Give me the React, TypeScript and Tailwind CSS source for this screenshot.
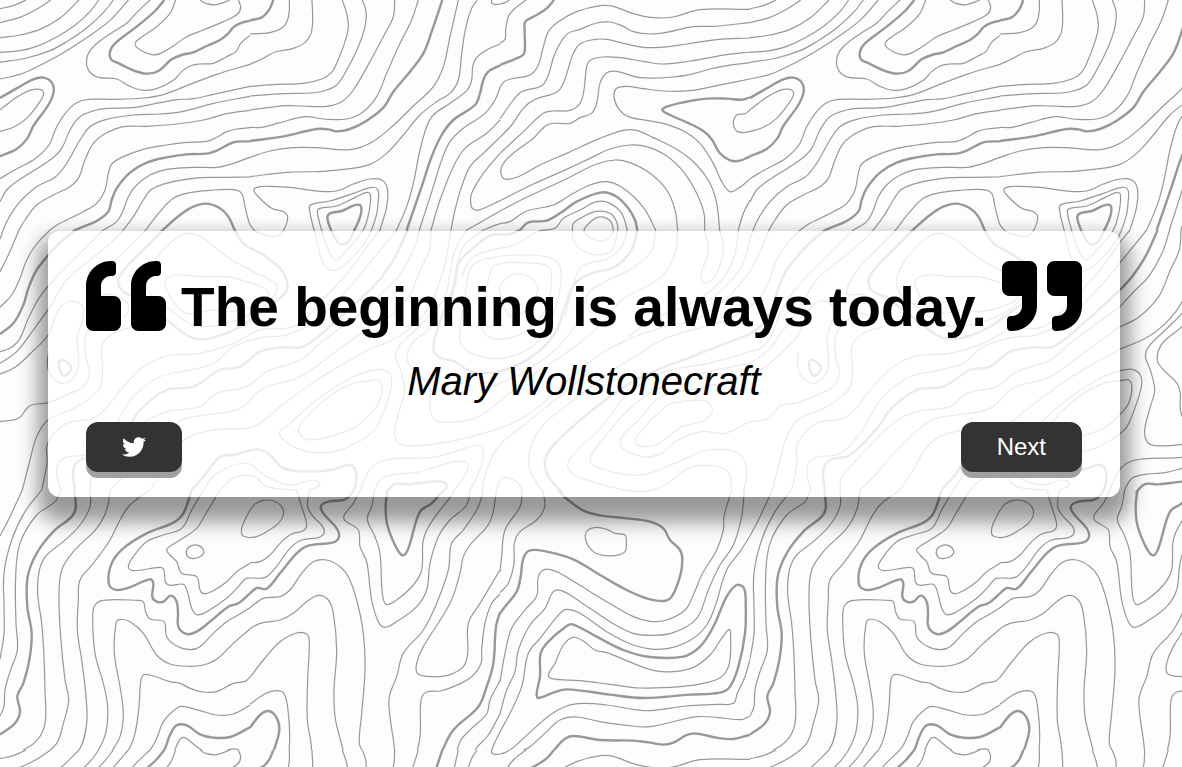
import { FaQuoteLeft, FaQuoteRight, FaTwitter } from "react-icons/fa";

type Region = { x: number; y: number; lines: string[] };

/*
 * Contour lines of the repeating map tile (2250 x 2250 units, three units per pixel).
 * Each entry is a list of "x,y" points. Prefix "!" marks an index contour,
 * suffix "z" a closed ring.
 */
const TILE = 2250;

const regions: Region[] = [
  {
    x: 0,
    y: 0,
    lines: [
      "0,26 40,17 78,0",
      "0,68 60,52 110,28 152,0",
      "0,113 60,105 120,88 180,54 237,0",
      "0,157 60,152 110,139 170,111 225,76 270,35 296,0",
      "0,187 80,174 150,152 200,125 260,84 310,38 340,0",
      "0,237 60,223 110,201 190,158 260,113 330,61 385,0",
      "450,0 410,38 380,70 340,95 285,135 263,165 261,200 275,222 300,233 350,237 390,259 430,271 470,266 520,241 545,215 570,198 600,192 640,190 680,170 708,155 722,130 750,106",
      "!493,0 465,33 410,80 345,130 330,155 333,178 350,187 400,211 440,221 475,213 515,178 545,165 580,157 620,138 660,120 685,100 700,82 720,70 750,62",
      "527,0 510,40 470,80 410,123 407,138 430,155 455,164 480,161 520,138 560,110 610,90 670,65 712,43 722,22 715,0",
      "600,0 620,11 650,14 690,0",
      "!0,294 50,265 100,238 130,233 155,247 161,275 145,315 100,378 82,415 50,447 0,469",
      "0,329 50,292 90,271 120,268 131,278 120,305 80,355 40,382 0,394",
      "0,536 40,512 100,480 130,455 150,430 170,380 200,335 230,308 265,298 350,298 430,294 490,284 560,257 650,223 750,193",
      "0,605 20,570 60,538 150,480 185,445 210,390 240,350 290,330 330,325 400,323 480,308 530,299 580,296 640,283 750,259",
      "0,717 20,665 60,605 110,560 165,532 200,490 240,420 270,380 320,358 400,345 480,342 550,334 640,310 750,289",
      "57,690 75,660 110,615 160,585 210,560 235,535 255,480 280,430 320,398 370,380 440,379 530,372 610,360 680,341 750,331",
      "150,690 180,670 250,635 290,610 315,570 325,520 335,492 370,470 430,448 500,435 560,427 620,424 650,412 680,395 710,387 750,383",
      "!225,690 250,680 290,663 325,635 335,600 350,565 390,518 440,488 500,472 560,463 620,461 650,452 690,431 710,425 750,424",
      "310,690 350,665 370,630 385,590 410,555 450,525 500,508 580,502 650,502 690,493 750,472",
      "370,690 400,650 430,600 455,568 510,547 580,535 660,532 750,531",
      "437,690 480,635 520,595 560,580 630,571 700,569 725,580 735,620 745,660 750,675",
      "!488,690 540,645 580,620 620,611 660,625 685,650 704,690",
    ],
  },
  {
    x: 750,
    y: 0,
    lines: [
      "!0,61 35,52 58,28 70,0",
      "0,102 60,98 95,85 112,62 118,30 118,0",
      "0,193 40,175 75,156 130,145 165,128 183,100 188,60 186,0",
      "277,0 290,40 295,80 285,125 262,185 245,217 215,237 160,250 80,253 0,259",
      "337,0 348,35 345,80 325,140 290,210 260,255 220,273 180,279 100,281 0,288",
      "434,0 430,50 400,110 360,185 310,270 275,305 230,319 180,319 110,317 60,322 0,330",
      "0,382 35,382 90,368 165,350 220,357 290,357 340,335 380,290 410,220 450,130 485,60 505,0",
      "!0,423 100,409 200,387 235,388 260,394 300,387 350,362 400,323 430,275 480,215 520,160 545,95 577,0",
      "0,472 60,453 130,443 200,443 300,449 360,430 420,385 490,318 550,260 580,200 600,110 625,0",
      "0,530 110,517 220,514 300,506 360,493 410,460 460,405 510,345 560,305 600,280 625,240 635,160 648,80 665,25 682,0",
      "750,132 710,150 678,175 668,200 665,240 650,272 600,310 550,345 530,380 510,450 490,550 470,620 440,690",
      "!750,196 715,215 700,240 690,280 675,315 610,360 575,405 545,470 515,560 470,690",
      "750,262 735,300 705,340 640,385 600,425 575,480 550,560 508,690",
      "750,360 710,400 645,445 610,500 570,600 543,690",
      "750,412 700,460 660,500 635,560 615,630 603,690",
      "750,460 700,520 665,580 662,610 670,628 690,629 750,602",
      "725,0 725,8 733,13 750,12",
      "750,633 700,662 650,690",
      "750,671 725,680 700,690",
      "0,675 15,692 40,703 75,710 98,695 113,655 102,636 65,625 20,585 12,568 30,560 60,559 120,562 190,572 260,573 310,552 360,537 395,540 412,565 410,620 390,690",
      "178,625 185,613 240,603 310,580 365,562 384,570 384,610 378,650 350,720 290,790 250,812 220,790 195,700z",
      "202,635 210,625 260,618 310,595 350,577 361,583 358,630 340,690 290,750 260,780 240,760 215,690z",
      "!232,655 240,640 275,633 310,617 330,615 334,635 325,665 312,692 295,725 270,732 250,705z",
    ],
  },
  {
    x: 1500,
    y: 0,
    lines: [
      "0,12 15,8 28,0",
      "0,130 15,118 17,90 25,50 45,25 78,0",
      "!0,195 65,168 74,155 74,90 76,65 110,45 140,25 162,0",
      "0,262 12,245 40,235 90,225 115,195 130,140 145,95 175,65 230,35 300,17 340,19 400,41 460,53 520,51 600,29 750,28",
      "0,357 40,300 65,275 125,257 145,225 165,160 200,103 240,88 290,69 330,66 365,77 400,95 450,102 500,97 580,80 640,79 750,68",
      "0,412 35,375 70,325 105,298 170,277 190,250 205,205 220,160 240,132 280,119 320,118 370,130 430,142 480,142 560,132 650,119 750,114",
      "0,460 70,395 130,340 160,333 210,331 240,310 252,270 260,200 272,180 310,171 360,173 430,184 490,192 570,183 680,164 750,156",
      "750,188 680,197 630,207 580,221 520,231 420,233 350,214 320,218 300,250 290,310 275,340 240,353 210,370 145,373 100,415 30,468 5,500 5,528 20,538 60,528 120,495 200,460 300,415 370,391 410,391 460,413 530,448 590,495 630,550 650,610 659,690",
      "750,237 650,257 570,272 490,273 430,266 380,259 350,265 342,290 355,325 385,350 440,361 500,373 560,398 600,430 640,490 665,545 690,575 715,565 750,537",
      "!750,292 725,299 680,296 620,296 550,307 500,320 487,330 510,345 560,367 610,393 635,418 660,460 690,481 720,482 750,469",
      "750,330 735,341 710,345 700,370 710,393 730,398 750,394",
      "0,602 100,552 200,508 270,475 330,447 390,435 440,440 500,468 550,515 590,580 612,640 614,690",
      "0,633 80,592 200,536 290,492 345,480 390,488 450,520 500,570 525,630 533,690",
      "0,671 30,665 80,633 160,615 220,580 270,555 320,545 370,565 430,622 467,690",
      "!60,690 85,667 140,662 180,640 230,605 305,577 350,590 385,625 405,660 412,690",
      "100,700 125,691 165,685 190,655 240,630 290,605 330,610 365,640 382,690",
      "217,690 220,670 250,650 290,634 330,640 350,665 354,690",
      "252,692 262,675 290,653 320,655 337,675 335,705 305,724 265,710z",
      "750,600 730,640 715,690",
    ],
  },
  {
    x: 0,
    y: 690,
    lines: [
      "0,125 25,75 57,0",
      "0,232 35,195 60,145 80,90 110,42 150,0",
      "!0,312 40,280 70,225 85,175 110,120 150,70 180,38 225,0",
      "0,365 30,355 60,325 85,265 120,200 170,140 250,60 310,0",
      "0,400 50,365 100,300 150,230 200,150 270,90 330,40 370,0",
      "0,432 45,412 100,362 144,315 175,240 210,213 245,225 250,260 232,320 236,400 222,440 190,460 155,440 142,405 145,370",
      "!178,395 190,390 213,412 205,430 190,437 180,420z",
      "0,575 55,565 90,527 144,518 210,490 250,470 268,430 255,370 265,300 330,250 375,260 383,220 340,195 290,190 330,110 380,60 437,0",
      "!488,0 440,50 380,110 355,150 370,185 420,205 440,225 500,270 560,315 600,328 650,320 720,290 790,240 855,190 862,160 840,115 790,75 730,40 704,0",
      "440,150 460,100 510,40 560,10 610,25 680,80 760,125 830,165 820,200 760,250 660,285 580,285 500,230 450,190z",
      "495,155 530,135 600,140 680,140 740,155 800,180 805,200 770,225 690,245 640,240 560,250 520,215z",
      "67,780 90,690 110,620 144,570 230,530 295,480 308,420 305,350 340,310 400,290",
      "125,780 141,700 143,640 200,580 290,560 370,470 430,410 500,378 600,370 700,340 780,300 880,290 950,230 1050,120 1110,37 1140,0",
      "182,780 170,720 190,685 270,670 330,610 400,500 480,440 560,422 640,400 700,350 790,322 860,315 950,270 1050,170 1125,80 1190,0",
      "!224,780 220,720 240,690 300,675 385,590 420,540 500,480 580,470 660,420 720,410 780,365 850,352 910,350 1000,280 1110,180",
      "270,780 275,740 310,700 430,580 500,545 600,530 650,490 740,470 800,425 900,390 960,340 1040,280 1110,230",
      "330,780 380,730 460,640 546,570 620,555 720,535 790,475 900,440 1000,370 1110,290",
      "450,780 480,735 546,635 640,600 760,590 840,530 950,450 1060,385 1110,357",
      "1110,422 1050,445 950,510 870,580 838,610 880,650 950,668 1020,660 1080,632 1110,612",
      "1110,452 1060,460 1000,490 930,550 895,600 920,628 980,622 1060,595 1110,555",
      "!575,780 610,740 660,680 700,675 770,658 810,675 850,715 940,725 1000,718 1050,705 1068,725 1065,770 1050,798",
      "610,780 650,730 740,700 800,740 870,765 940,750 960,765 928,780",
      "660,780 700,745 760,738 800,770 890,780",
    ],
  },
  {
    x: 1125,
    y: 690,
    lines: [
      "!-15,180 21,140 61,80 98,0",
      "-15,230 31,180 71,140 111,70 134,0",
      "-15,290 41,262 101,200 136,120 163,60 168,0",
      "-15,357 61,325 121,280 171,215 210,100 228,0",
      "-15,422 21,418 46,435 49,470 31,530 6,590 -15,612",
      "-15,452 11,450 21,470 11,520 -15,555",
      "275,0 240,60 225,130 210,200 171,250 121,300 71,350 61,380 76,420 89,480 76,530 59,600 66,635 91,647 171,643 290,620 450,560 580,450 680,370 780,320 870,290 960,270 1050,210 1125,125",
      "325,0 265,50 240,140 225,230 171,290 121,330 101,360 98,395 121,425 156,460 166,490 166,540 180,570 230,577 310,560 390,500 480,430 600,350 680,280 740,210 860,140 900,70 908,0",
      "-50,790 -15,718 21,693 81,685 171,682 240,665 310,645 325,665 315,720 280,790",
      "-3,790 1,775 21,745 61,733 121,728 171,715 240,695 278,700 270,735 232,790",
      "!33,790 41,778 61,762 101,763 171,755 205,756 215,770 200,790",
      "!435,0 400,14 350,15 300,50 250,100 240,160 200,260 175,350 190,380 240,395 290,425 370,425 470,380 540,310 570,230 600,160 650,130 720,110 770,60 787,0",
      "842,0 830,60 780,110 700,150 640,190 610,270 540,360 440,430 350,470",
      "592,0 595,30 620,60 670,75 710,60 729,0",
      "475,10 420,45 350,60 290,85 260,140",
      "757,0 740,50 700,85 620,110 590,180 570,260",
      "375,190 375,170 400,140 430,132 470,145 488,180 470,220 440,250 400,255z",
      "340,150 360,105 480,100 520,110 530,150 515,230 470,290 420,320 350,325 320,290 325,220z",
      "290,110 340,85 440,75 530,85 558,120 550,200 520,290 470,350 380,385 290,370 255,330 270,200z",
      "989,0 1000,60 978,140 990,160 1020,140 1045,60 1034,0",
      "1090,0 1080,70 1040,150 950,220 830,270 760,320",
      "1125,27 1100,110 1030,190 960,235",
      "1125,232 1040,275 950,300 860,330 780,380 700,430 610,500 500,590 465,660 465,720 507,790",
      "!1125,312 950,380 800,440 720,490 640,550 540,640 510,690 520,740 565,790",
      "1125,365 1000,400 870,425 760,490 680,590 590,680 580,715 620,745 790,785 870,765 930,720 990,705 1060,725 1070,790",
      "1125,400 980,430 850,475 760,540 690,620 645,690 690,720 800,735 900,700 1000,660 1090,670 1115,720 1105,790",
      "1125,432 1000,470 860,500 800,560 735,640 800,680 860,670 900,635 980,605 1050,610 1125,575",
      "780,635 810,590 860,540 890,520 990,512 1012,540 990,570 920,590 880,620 840,645 800,650z",
      "320,790 335,720 370,650 440,590 540,510 640,430",
      "362,790 375,750 395,743 430,760 442,790",
    ],
  },
  {
    x: 0,
    y: 1470,
    lines: [
      "0,138 30,80 67,0",
      "125,0 75,65 35,150 12,250 12,350 12,430 0,508",
      "182,0 165,35 110,75 60,160 47,260 48,400 52,480 30,545 15,600 12,650 0,678",
      "!223,0 227,55 215,80 160,125 110,190 83,260 82,350 95,430 88,510 70,580 52,618 60,665 45,700 0,734",
      "270,0 270,50 240,105 190,155 140,195 118,240 113,310 125,400 131,480 135,600 135,700 110,752 60,785 0,807",
      "330,0 320,60 290,115 220,185 185,240 177,320 182,440 195,570 206,630 190,700 170,760 120,802 65,830",
      "450,0 390,45 360,90 330,150 280,220 240,270 235,330 232,420 245,510 258,620 260,700 240,775 185,830",
      "!575,0 550,70 520,98 440,130 370,175 335,220 326,280 345,299 380,295 450,268 460,280 457,320 470,335 490,335 512,317 530,335 534,370 535,410 560,432 590,425 630,395 685,350 715,340 750,310",
      "610,0 575,60 545,115 490,135 440,155 400,200 385,230 400,242 480,232 492,240 496,275 510,286 550,283 562,305 575,355 590,374 620,365 680,325 715,290 735,267 750,264",
      "660,0 615,75 590,115 540,150 500,178 510,195 530,215 545,250 590,260 600,300 612,311 640,302 680,275 710,245 750,220",
      "560,180 575,167 595,166 611,182 605,197 580,206 563,200z",
      "750,60 730,100 724,125 730,138 750,143",
      "750,353 720,372 680,395 640,430 600,470 570,479 530,468 500,440 492,395 450,387 437,365 430,335 415,331 310,331 285,345 278,380 285,490 310,580 323,650 318,725 295,780 255,830",
      "750,417 700,460 650,508 610,525 570,529 510,522 470,495 430,430 390,395 360,388 348,400 343,490 360,590 370,670 360,740 330,790 295,830",
      "750,562 735,574 700,580 650,605 610,606 570,595 540,580 510,575 450,555 430,555 422,575 417,650 405,730 385,780 330,832",
      "750,645 700,672 650,675 600,662 545,649 520,662 490,695 470,745 450,780 395,832",
      "!750,712 690,741 640,743 600,733 560,706 530,706 510,735 490,785 445,832",
      "500,832 520,790 540,748 555,743 590,770 620,788 650,793 690,778 715,780 722,800",
    ],
  },
  {
    x: 750,
    y: 1470,
    lines: [
      "0,62 15,42 40,31 70,33 95,50 100,75 85,100 50,125 20,140 0,143",
      "140,0 155,50 170,105 160,122 125,132 95,155 60,195 30,215 0,218",
      "178,0 173,50 190,80 218,110 222,130 205,143 155,150 120,175 75,235 45,262 0,264",
      "!300,18 280,30 235,35 213,48 220,70 260,115 267,140 250,157 175,167 140,190 90,250 50,296 20,294 0,310",
      "330,0 310,40 283,75 285,92 325,120 330,170 350,215 365,330 385,395 405,412 440,395 500,350 530,300 540,220 565,140 600,90 650,45 660,0",
      "374,0 365,50 352,88 375,140 390,190 397,310 408,343 440,330 490,285 515,240 520,150 545,95 610,10",
      "!412,0 407,50 412,105 440,175 460,196 475,175 510,65 545,40 575,5",
      "0,353 40,325 90,320 120,300 155,250 190,215 230,210 270,230 295,260 320,330 340,430 345,540 335,670 328,760 340,790 347,830",
      "0,416 30,400 90,390 130,370 170,335 205,316 235,330 250,370 260,480 252,600 255,680 270,745 293,830",
      "0,562 40,510 90,455 140,429 170,432 178,455 173,570 172,690 183,760 187,830",
      "0,643 40,614 80,602 103,612 115,670 119,750 112,830",
      "!0,713 30,675 55,663 78,680 88,715 80,755 60,805 30,832",
      "700,0 685,50 640,120 605,160 595,240 560,340 520,420 460,490 440,560 418,620 420,680 433,780 425,830",
      "740,0 720,95 660,165 640,200 630,250 600,340 520,470 500,520 502,550 530,559 590,557 640,530 653,490 655,400 690,340 720,290 750,240",
      "750,312 725,340 705,400 695,480 693,520 665,560 610,590 570,603 530,606 513,630 510,740 490,830",
      "!750,367 738,410 730,520 710,590 685,650 610,720 580,775 557,830",
      "750,572 720,630 710,672 665,715 630,755 612,830",
      "750,672 715,735 675,780 657,830",
      "750,725 727,775 725,790 735,794 750,793",
    ],
  },
  {
    x: 1500,
    y: 1470,
    lines: [
      "67,0 60,50 15,120 5,200 0,245",
      "128,0 134,50 110,90 60,125 43,160 42,220 25,280 0,308",
      "!0,370 15,350 50,305 62,260 70,205 90,181 140,185 220,208 300,255 380,300 440,325 490,333 515,320 540,260 547,210 540,180 510,150 490,115 450,95 380,85 300,76 250,62 190,18 172,0",
      "257,150 262,122 290,112 320,118 345,130 375,135 379,160 375,185 350,196 310,196 280,185z",
      "0,575 15,490 35,415 75,360 110,318 115,260 135,238 170,245 230,280 320,335 400,380 450,394 500,390 555,360 580,315 605,255 650,180 670,120 672,80 695,0",
      "0,672 20,600 45,545 55,480 90,405 135,355 160,305 185,302 240,335 330,395 400,430 460,436 520,428 590,385 625,300 660,225 700,165 725,80 733,0",
      "0,725 30,670 65,590 85,490 120,445 180,370 200,358 240,370 320,425 400,465 460,478 520,472 580,445 620,405 645,350 680,240 720,185 750,138",
      "!218,403 290,440 370,480 450,501 550,500 600,470 640,410 680,320 710,285 732,295 737,340 735,430 715,530 690,590 660,608 570,614 430,624 330,614 200,598 160,608 115,624 110,610 120,560 122,490 145,455 200,408z",
      "145,555 165,520 190,465 220,442 250,453 285,480 320,488 400,520 460,541 520,545 580,532 630,495 665,445 688,418 692,440 688,520 665,560 620,578 540,590 420,594 330,583 240,572 155,566z",
      "750,508 735,560 712,610 700,640 650,643 560,648 450,662 400,658 320,645 250,640 200,648 150,675 70,745 30,780 0,792",
      "750,678 725,689 650,682 590,680 540,690 450,710 380,706 300,695 230,681 180,690 140,725 90,770 40,798 22,830",
      "!750,734 700,747 650,743 590,731 560,735 520,758 490,764 450,758 400,752 300,750 220,738 190,750 150,793 90,832",
    ],
  },
];

/* Turns a point list into a smooth Catmull-Rom curve. */
function contour(line: string): string {
  const closed = line.endsWith("z");
  const pts = line
    .replace(/[!z]/g, "")
    .split(" ")
    .map((p) => p.split(",").map(Number));
  const n = pts.length;
  const at = (i: number) =>
    closed ? pts[(i + n) % n] : pts[Math.max(0, Math.min(n - 1, i))];
  let d = `M${pts[0][0]} ${pts[0][1]}`;
  const segments = closed ? n : n - 1;
  for (let i = 0; i < segments; i++) {
    const [a, b, c, e] = [at(i - 1), at(i), at(i + 1), at(i + 2)];
    const len = Math.hypot(c[0] - b[0], c[1] - b[1]);
    const before = Math.hypot(b[0] - a[0], b[1] - a[1]);
    const after = Math.hypot(e[0] - c[0], e[1] - c[1]);
    const k1 = (len / (len + before)) * 0.37;
    const k2 = (len / (len + after)) * 0.37;
    const x1 = b[0] + (c[0] - a[0]) * k1;
    const y1 = b[1] + (c[1] - a[1]) * k1;
    const x2 = c[0] - (e[0] - b[0]) * k2;
    const y2 = c[1] - (e[1] - b[1]) * k2;
    d += `C${x1.toFixed(1)} ${y1.toFixed(1)} ${x2.toFixed(1)} ${y2.toFixed(1)} ${c[0]} ${c[1]}`;
  }
  return closed ? d + "Z" : d;
}

function Topography() {
  return (
    <svg className="absolute inset-0 h-full w-full" aria-hidden="true">
      <defs>
        <pattern
          id="contours"
          width={TILE}
          height={TILE}
          patternUnits="userSpaceOnUse"
          patternTransform="scale(0.333333)"
        >
          <g fill="none" stroke="#97979d" strokeLinejoin="round">
            {regions.map((r) => (
              <g key={`${r.x}-${r.y}`} transform={`translate(${r.x} ${r.y})`}>
                {r.lines.map((line) => (
                  <path
                    key={line}
                    d={contour(line)}
                    strokeWidth={line.startsWith("!") ? 7.2 : 3.6}
                  />
                ))}
              </g>
            ))}
          </g>
        </pattern>
      </defs>
      <rect width="100%" height="100%" fill="url(#contours)" />
    </svg>
  );
}

const buttonStyle =
  "flex h-[50px] cursor-pointer items-center justify-center rounded-xl bg-[#333333] text-2xl text-white shadow-[0_6px_0_#a0a0a0]";

export default function App() {
  return (
    <main className="relative flex min-h-screen items-center bg-[#fdfdfe] pr-[62px] pb-[39px] pl-12 font-['Liberation_Sans',Arial,sans-serif] text-black">
      <Topography />
      <section className="relative w-full rounded-xl bg-white/80 px-[38px] pt-[25px] pb-[25px] shadow-[0_15px_20px_10px_rgba(0,0,0,0.4)]">
        <h1 className="flex items-start justify-between text-[55px] leading-[102px] font-bold">
          <FaQuoteLeft className="size-20 shrink-0" />
          <span>The beginning is always today.</span>
          <FaQuoteRight className="size-20 shrink-0" />
        </h1>
        <p className="text-center text-[40px] leading-[46px] italic">
          Mary Wollstonecraft
        </p>
        <div className="mt-[18px] flex justify-between">
          <a href="#tweet" aria-label="Tweet this quote" className={`${buttonStyle} w-24`}>
            <FaTwitter className="size-6" />
          </a>
          <button type="button" className={`${buttonStyle} px-9`}>
            Next
          </button>
        </div>
      </section>
    </main>
  );
}
